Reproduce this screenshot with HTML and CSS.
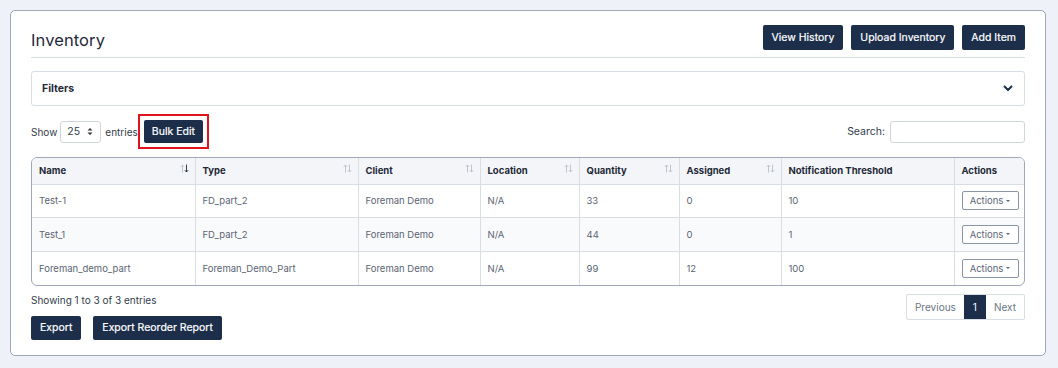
FILE: index.html
```html
<!DOCTYPE html>
<html>
<head>
<meta charset="utf-8">
<link rel="stylesheet" href="styles.css">
</head>
<body>
<div class="card">
  <div class="header">
    <h1 class="title">Inventory</h1>
    <div class="header-actions">
      <button class="btn">View History</button>
      <button class="btn">Upload Inventory</button>
      <button class="btn">Add Item</button>
    </div>
  </div>

  <div class="filters">
    <span class="filters-label">Filters</span>
    <svg class="chev" width="10" height="7" viewBox="0 0 10 7"><path d="M1.5 1.5 L5 5 L8.5 1.5" fill="none" stroke="#1c2e4a" stroke-width="2" stroke-linecap="round" stroke-linejoin="round"/></svg>
  </div>

  <div class="toolbar">
    <div class="length">
      <span>Show</span>
      <div class="select"><span>25</span>
        <svg width="6" height="9" viewBox="0 0 6 9"><path d="M0.5 3.5 L3 1 L5.5 3.5 Z M0.5 5.5 L3 8 L5.5 5.5 Z" fill="#333"/></svg>
      </div>
      <span>entries</span>
      <span class="highlight"><button class="btn btn-bulk">Bulk Edit</button></span>
    </div>
    <label class="search">Search: <span class="search-input"></span></label>
  </div>

  <div class="table-wrap">
    <table class="grid">
      <colgroup>
        <col style="width:163px"><col style="width:163px"><col style="width:122px"><col style="width:99px"><col style="width:100px"><col style="width:102px"><col style="width:173px"><col style="width:72px">
      </colgroup>
      <thead>
        <tr>
          <th class="sortable sorted">Name<span class="sort"><svg width="9" height="9" viewBox="0 0 9 9"><path d="M2.5 8.5 V1 M0.8 2.8 L2.5 1 L4.2 2.8" fill="none" stroke="#b9c0ca" stroke-width="0.9"/><path d="M6.5 0.5 V8 M4.8 6.2 L6.5 8 L8.2 6.2" fill="none" stroke="#1f2937" stroke-width="0.9"/></svg></span></th>
          <th class="sortable">Type<span class="sort"><svg width="9" height="9" viewBox="0 0 9 9"><path d="M2.5 8.5 V1 M0.8 2.8 L2.5 1 L4.2 2.8" fill="none" stroke="#b9c0ca" stroke-width="0.9"/><path d="M6.5 0.5 V8 M4.8 6.2 L6.5 8 L8.2 6.2" fill="none" stroke="#b9c0ca" stroke-width="0.9"/></svg></span></th>
          <th class="sortable">Client<span class="sort"><svg width="9" height="9" viewBox="0 0 9 9"><path d="M2.5 8.5 V1 M0.8 2.8 L2.5 1 L4.2 2.8" fill="none" stroke="#b9c0ca" stroke-width="0.9"/><path d="M6.5 0.5 V8 M4.8 6.2 L6.5 8 L8.2 6.2" fill="none" stroke="#b9c0ca" stroke-width="0.9"/></svg></span></th>
          <th class="sortable">Location<span class="sort"><svg width="9" height="9" viewBox="0 0 9 9"><path d="M2.5 8.5 V1 M0.8 2.8 L2.5 1 L4.2 2.8" fill="none" stroke="#b9c0ca" stroke-width="0.9"/><path d="M6.5 0.5 V8 M4.8 6.2 L6.5 8 L8.2 6.2" fill="none" stroke="#b9c0ca" stroke-width="0.9"/></svg></span></th>
          <th class="sortable">Quantity<span class="sort"><svg width="9" height="9" viewBox="0 0 9 9"><path d="M2.5 8.5 V1 M0.8 2.8 L2.5 1 L4.2 2.8" fill="none" stroke="#b9c0ca" stroke-width="0.9"/><path d="M6.5 0.5 V8 M4.8 6.2 L6.5 8 L8.2 6.2" fill="none" stroke="#b9c0ca" stroke-width="0.9"/></svg></span></th>
          <th class="sortable">Assigned<span class="sort"><svg width="9" height="9" viewBox="0 0 9 9"><path d="M2.5 8.5 V1 M0.8 2.8 L2.5 1 L4.2 2.8" fill="none" stroke="#b9c0ca" stroke-width="0.9"/><path d="M6.5 0.5 V8 M4.8 6.2 L6.5 8 L8.2 6.2" fill="none" stroke="#b9c0ca" stroke-width="0.9"/></svg></span></th>
          <th>Notification Threshold</th>
          <th>Actions</th>
        </tr>
      </thead>
      <tbody>
        <tr>
          <td>Test-1</td><td>FD_part_2</td><td>Foreman Demo</td><td>N/A</td><td>33</td><td>0</td><td>10</td>
          <td><button class="act">Actions <span class="caret"></span></button></td>
        </tr>
        <tr class="alt">
          <td>Test_1</td><td>FD_part_2</td><td>Foreman Demo</td><td>N/A</td><td>44</td><td>0</td><td>1</td>
          <td><button class="act">Actions <span class="caret"></span></button></td>
        </tr>
        <tr>
          <td>Foreman_demo_part</td><td>Foreman_Demo_Part</td><td>Foreman Demo</td><td>N/A</td><td>99</td><td>12</td><td>100</td>
          <td><button class="act">Actions <span class="caret"></span></button></td>
        </tr>
      </tbody>
    </table>
  </div>

  <div class="footer">
    <div class="footer-left">
      <div class="info">Showing 1 to 3 of 3 entries</div>
      <div class="exports">
        <button class="btn btn-lg">Export</button>
        <button class="btn btn-lg">Export Reorder Report</button>
      </div>
    </div>
    <div class="pager">
      <span class="pg">Previous</span><span class="pg active">1</span><span class="pg">Next</span>
    </div>
  </div>
</div>
</body>
</html>
```

FILE: styles.css
```css
* { box-sizing: border-box; }
html, body { margin: 0; }
body {
  background: #eef1f8;
  font-family: Inter, "Noto Sans", sans-serif;
  color: #1f2937;
  padding: 10px 12px 12px 10px;
}
.card {
  background: #fff;
  border: 1px solid #9ea8b6;
  border-radius: 5px;
  padding: 14px 20px 14px 20px;
  height: 346px;
}
.header {
  display: flex;
  justify-content: space-between;
  align-items: flex-start;
  border-bottom: 1px solid #d7dce3;
  padding-bottom: 7px;
}
.title {
  margin: 5px 0 0 0;
  font-size: 16.5px;
  font-weight: 400;
  color: #1f2a3c;
  letter-spacing: 0.1px;
}
.header-actions { display: flex; gap: 8px; }
.btn {
  font-family: inherit;
  background: #1c2e4a;
  color: #fff;
  border: none;
  border-radius: 2px;
  font-size: 10.5px;
  font-weight: 400;
  height: 25px;
  padding: 0 9px;
  -webkit-text-stroke: 0.2px #fff;
}
.filters {
  margin-top: 13px;
  height: 35px;
  border: 1px solid #d9dee5;
  border-radius: 3px;
  display: flex;
  align-items: center;
  justify-content: space-between;
  padding: 0 11px 0 10px;
}
.filters-label { font-size: 10.5px; font-weight: 700; color: #1f2937; }
.toolbar {
  margin-top: 8px;
  display: flex;
  justify-content: space-between;
  align-items: center;
  height: 35px;
  font-size: 10px;
  color: #333d4b;
}
.length { display: flex; align-items: center; }
.select {
  margin: 0 4px 0 3px;
  width: 41px;
  height: 22px;
  border: 1px solid #d0d5dc;
  border-radius: 3px;
  display: flex;
  align-items: center;
  justify-content: space-between;
  padding: 0 7px 0 6px;
  font-size: 10.5px;
}
.highlight {
  margin-left: 0;
  border: 2px solid #e3131b;
  padding: 4px;
  display: flex;
}
.btn-bulk {
  height: 23px;
  padding: 0 8px;
}
.search { display: flex; align-items: center; gap: 5px; font-size: 10.5px; }
.search-input {
  width: 135px;
  height: 22px;
  border: 1px solid #d0d5dc;
  border-radius: 3px;
}
.table-wrap {
  margin-top: 8px;
  border: 1px solid #9ea8b6;
  border-radius: 6px;
  overflow: hidden;
}
.grid {
  width: 100%;
  border-collapse: collapse;
  table-layout: fixed;
  font-size: 9.5px;
}
.grid th, .grid td {
  border-left: 1px solid #d9dee5;
  text-align: left;
  padding: 0 7px;
}
.grid th:first-child, .grid td:first-child { border-left: none; }
.grid th {
  background: #f3f5f9;
  height: 26px;
  font-weight: 700;
  color: #1f2937;
  border-bottom: 1px solid #d9dee5;
  position: relative;
}
.grid td {
  height: 33.5px;
  color: #5a6473;
  border-top: 1px solid #d9dee5;
}
.grid tbody tr:first-child td { border-top: none; }
.grid tr.alt td { background: #f9fafc; }
.sort {
  position: absolute;
  right: 6px;
  top: 6px;
  line-height: 0;
}
.act {
  font-family: inherit;
  background: #fff;
  border: 1px solid #8a96a7;
  border-radius: 2px;
  height: 19px;
  width: 57px;
  font-size: 9.5px;
  color: #5b6676;
  padding: 0;
  display: flex;
  align-items: center;
  justify-content: center;
  gap: 3px;
}
.caret {
  width: 0; height: 0;
  border-left: 2.5px solid transparent;
  border-right: 2.5px solid transparent;
  border-top: 2.5px solid #5b6676;
}
.footer {
  margin-top: 7px;
  display: flex;
  justify-content: space-between;
  align-items: flex-start;
}
.info { font-size: 10px; color: #333d4b; margin-top: 1px; line-height: 12px; }
.exports { display: flex; gap: 12px; margin-top: 10px; }
.btn-lg { height: 24px; }
.pager {
  margin-top: 1px;
  display: flex;
  border: 1px solid #d9dee5;
  border-radius: 2px;
  height: 26px;
  font-size: 10px;
  color: #6b7685;
}
.pg { display: flex; align-items: center; padding: 0 8px; }
.pg + .pg { border-left: 1px solid #d9dee5; }
.pg.active { background: #1c2e4a; color: #fff; padding: 0 9px; border-left: none; }
.pg.active + .pg { border-left: none; }
```
